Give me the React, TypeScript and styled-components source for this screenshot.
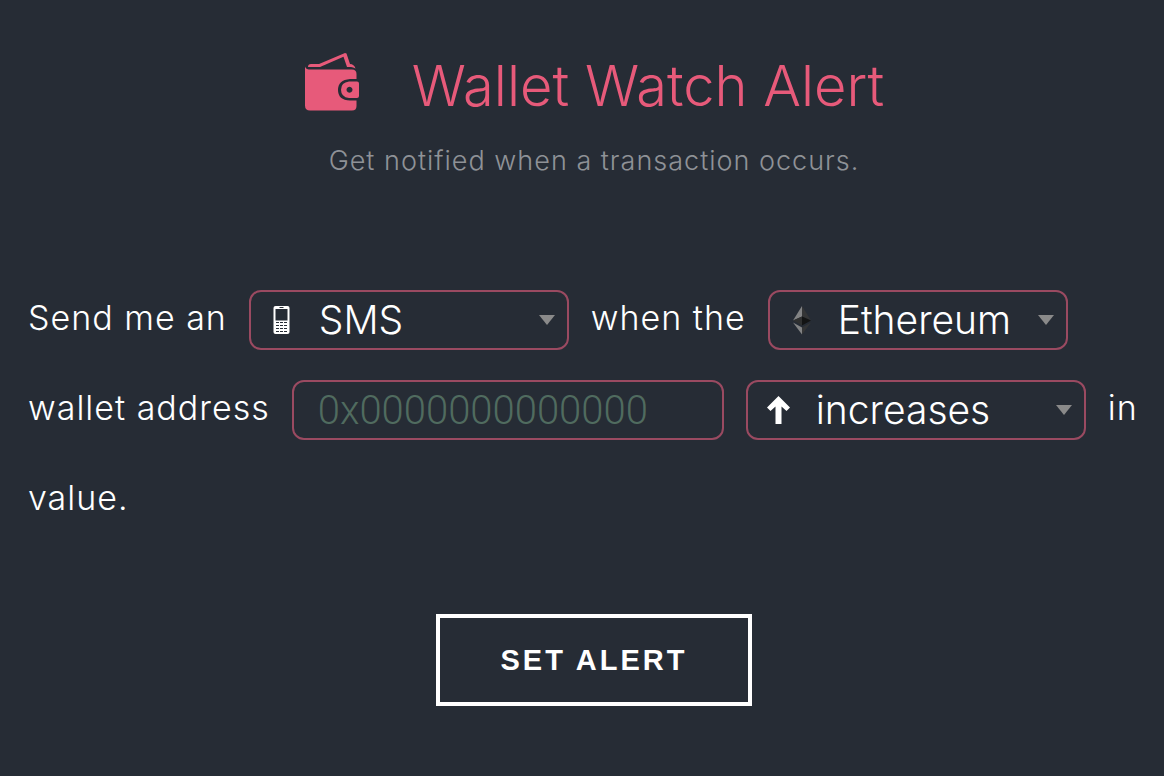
import React from "react";
import styled, { createGlobalStyle } from "styled-components";

const GlobalStyle = createGlobalStyle`
  *, *::before, *::after { box-sizing: border-box; }
  body {
    margin: 0;
    background: #262c35;
    color: #fff;
    font-family: Inter, "Liberation Sans", Arial, sans-serif;
    font-weight: 300;
  }
`;

const Page = styled.main`
  display: flex;
  flex-direction: column;
  align-items: center;
  padding: 48px 4px 70px 28px;
`;

const Header = styled.header`
  display: flex;
  flex-direction: column;
  align-items: center;
`;

const TitleRow = styled.div`
  display: flex;
  align-items: center;
  gap: 52px;
  color: #e75a7a;
`;

const Title = styled.h1`
  margin: 0;
  font-size: 56px;
  line-height: 76px;
  font-weight: 300;
`;

const Subtitle = styled.p`
  margin: 19px 0 0;
  color: #8f9297;
  font-size: 27px;
  line-height: 36px;
  letter-spacing: 1px;
`;

const AlertForm = styled.form`
  display: flex;
  flex-direction: column;
  align-items: center;
  gap: 69px;
  width: 100%;
  margin-top: 96px;
`;

const Sentence = styled.div`
  display: flex;
  flex-wrap: wrap;
  align-items: center;
  column-gap: 22px;
  width: 100%;
  font-size: 34px;
  line-height: 90px;
`;

const Phrase = styled.span`
  padding-bottom: 4px;
  line-height: 86px;
  letter-spacing: 1px;
`;

const Field = styled.span<{ $width: number }>`
  position: relative;
  display: flex;
  align-items: center;
  width: ${(p) => p.$width}px;
  max-width: 100%;
  height: 60px;
  border: 2px solid #9a4a61;
  border-radius: 12px;
  line-height: 56px;
`;

const FieldIcon = styled.span`
  position: absolute;
  left: 15px;
  display: flex;
  pointer-events: none;
`;

const Caret = styled.span`
  position: absolute;
  right: 12px;
  border: 8px solid transparent;
  border-top: 10px solid #8a8a8a;
  border-bottom: 0;
  pointer-events: none;
`;

const Select = styled.select`
  appearance: none;
  width: 100%;
  height: 56px;
  padding: 0 0 0 68px;
  border: 0;
  border-radius: 10px;
  background: transparent;
  color: #fff;
  font: inherit;
  font-size: 39px;

  option { background: #262c35; }
`;

const AddressInput = styled.input`
  width: 100%;
  height: 56px;
  padding: 0 24px;
  border: 0;
  border-radius: 10px;
  background: transparent;
  color: #fff;
  font-family: Roboto, "Liberation Sans", sans-serif;
  font-weight: 300;
  font-size: 40px;

  &::placeholder { color: #506b5f; opacity: 1; }
`;

const SubmitButton = styled.button`
  padding: 24px 60px;
  border: 4px solid #fff;
  background: transparent;
  color: #fff;
  font-family: "Liberation Sans", Arial, sans-serif;
  font-size: 29px;
  font-weight: 700;
  line-height: 36px;
  letter-spacing: 3px;
  text-transform: uppercase;
`;

const WalletIcon = () => (
  <svg width="56" height="68" viewBox="0 0 56 68" fill="currentColor" aria-hidden="true">
    <path d="M1 14.500 Q2 17.500 5 17.500 H48 Q52.500 17.500 52.500 22 V27 H46 Q34 28 34 38 Q34 48 46 48.500 H52.500 V54 Q52.500 58.500 48 58.500 H6 Q1 58.500 1 53.500 Z" />
    <path d="M4 15 Q4 12 7 12 H15 L41 1 L42.500 1.500 L46 12 Q50 12 51.500 16.500 Q49 15 47 15 H43 L39.500 4.800 L16 15 Z" />
    <path fillRule="evenodd" d="M45 29.500 H53 Q55 29.500 55 31.500 V44 Q55 46 53 46 H45 Q37 45 37 37.700 Q37 30.500 45 29.500 Z M45.500 34.800 a3 3 0 1 0 .01 0 Z" />
  </svg>
);

const PhoneIcon = () => (
  <svg width="32" height="32" viewBox="0 0 32 32" aria-hidden="true">
    <rect x="7.500" y="2" width="16" height="28" rx="2" fill="#fff" />
    <g fill="#262c35">
      <rect x="9.500" y="5" width="12" height="11.500" />
      <rect x="13.500" y="3" width="4" height="1" />
      {[18, 21, 24, 27].map((y) =>
        [10, 14, 18].map((x) => <rect key={`${x}-${y}`} x={x} y={y} width="3" height="1" />)
      )}
    </g>
  </svg>
);

const EthereumIcon = () => (
  <svg width="32" height="32" viewBox="0 0 32 32" aria-hidden="true">
    <path d="M17 2 L8 16.500 L17 12.500 Z" fill="#828384" />
    <path d="M17 2 L26 16.500 L17 12.500 Z" fill="#343536" />
    <path d="M8 16.500 L17 12.500 V21.500 Z" fill="#2f3030" />
    <path d="M26 16.500 L17 12.500 V21.500 Z" fill="#131414" />
    <path d="M8 18.500 L17 23.500 V30.500 Z" fill="#828384" />
    <path d="M26 18.500 L17 23.500 V30.500 Z" fill="#343536" />
  </svg>
);

const ArrowUpIcon = () => (
  <svg width="32" height="32" viewBox="0 0 32 32" aria-hidden="true">
    <path d="M15.500 2 L27 13.500 L23.500 17 L18.500 12.500 V30 H12.500 V12.500 L7.500 17 L4 13.500 Z" fill="#fff" />
  </svg>
);

type PickerProps = {
  label: string;
  width: number;
  icon: React.ReactNode;
  options: string[];
};

const Picker = ({ label, width, icon, options }: PickerProps) => (
  <Field $width={width}>
    <FieldIcon>{icon}</FieldIcon>
    <Select aria-label={label}>
      {options.map((option) => (
        <option key={option}>{option}</option>
      ))}
    </Select>
    <Caret />
  </Field>
);

export default function App() {
  return (
    <>
      <GlobalStyle />
      <Page>
        <Header>
          <TitleRow>
            <WalletIcon />
            <Title>Wallet Watch Alert</Title>
          </TitleRow>
          <Subtitle>Get notified when a transaction occurs.</Subtitle>
        </Header>
        <AlertForm onSubmit={(event) => event.preventDefault()}>
          <Sentence>
            <Phrase>Send me an</Phrase>
            <Picker label="Alert type" width={320} icon={<PhoneIcon />} options={["SMS"]} />
            <Phrase>when the</Phrase>
            <Picker label="Currency" width={300} icon={<EthereumIcon />} options={["Ethereum"]} />
            <Phrase>wallet address</Phrase>
            <Field $width={432}>
              <AddressInput aria-label="Wallet address" placeholder="0x0000000000000" />
            </Field>
            <Picker label="Change" width={340} icon={<ArrowUpIcon />} options={["increases"]} />
            <Phrase>in</Phrase>
            <Phrase>value.</Phrase>
          </Sentence>
          <SubmitButton type="submit">Set alert</SubmitButton>
        </AlertForm>
      </Page>
    </>
  );
}
